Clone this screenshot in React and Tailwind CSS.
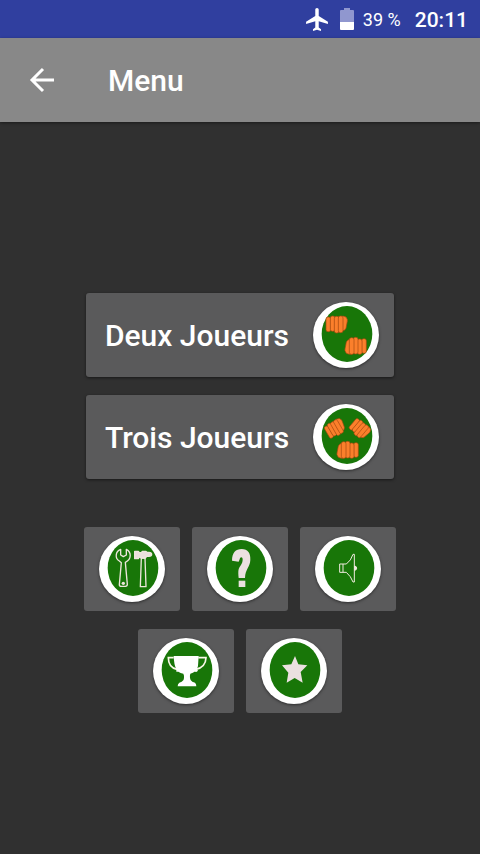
const WIDE_BUTTONS = [
  { label: 'Deux Joueurs', Art: TwoFists },
  { label: 'Trois Joueurs', Art: ThreeFists },
]

const SMALL_BUTTONS = [
  { label: 'Options', Art: Tools },
  { label: 'Aide', Art: Question },
  { label: 'Son', Art: Speaker },
  { label: 'Scores', Art: Trophy },
  { label: 'Noter', Art: Star },
]

export default function App() {
  return (
    <div className="flex min-h-screen flex-col bg-[#303030] font-['Roboto','Noto_Sans',sans-serif] text-white">
      <StatusBar />
      <header className="flex h-[84px] items-center bg-[#888888] pl-6 shadow-[0_1px_3px_rgba(0,0,0,0.45)]">
        <button type="button" aria-label="Retour" className="flex size-9 items-center justify-center">
          <BackArrow />
        </button>
        <h1 className="ml-12 pt-px text-[30px] font-medium leading-9">Menu</h1>
      </header>

      <main className="flex flex-1 flex-col items-center justify-center pt-[30px]">
        <div className="flex flex-col gap-[18px]">
          {WIDE_BUTTONS.map(({ label, Art }) => (
            <button
              key={label}
              type="button"
              className="flex h-[84px] items-center justify-between gap-6 rounded-[3px] bg-[#5a5a5b] pl-[19px] pr-[15px] shadow-[0_1px_3px_rgba(0,0,0,0.5)]"
            >
              <span className="pt-0.5 text-[30px] font-medium leading-9">{label}</span>
              <Disc>
                <Art />
              </Disc>
            </button>
          ))}
        </div>

        <div className="mt-12 flex max-w-[312px] flex-wrap justify-center gap-x-3 gap-y-[18px]">
          {SMALL_BUTTONS.map(({ label, Art }) => (
            <button
              key={label}
              type="button"
              aria-label={label}
              className="flex h-[84px] w-24 items-center justify-center rounded-[3px] bg-[#5a5a5b]"
            >
              <Disc>
                <Art />
              </Disc>
            </button>
          ))}
        </div>
      </main>
    </div>
  )
}

function StatusBar() {
  return (
    <div className="flex h-[38px] items-center justify-end bg-[#303f9f] pr-3">
      <svg viewBox="2 2 19 20" className="h-[23px] w-[22px]" fill="#fff">
        <path d="M21 16v-2l-8-5V3.5c0-.83-.67-1.5-1.5-1.5S10 2.67 10 3.5V9l-8 5v2l8-2.5V19l-2 1.5V22l3.5-1 3.5 1v-1.5L13 19v-5.5l8 2.5z" />
      </svg>
      <svg viewBox="0 0 14 22" className="ml-3 h-[22px] w-[14px]">
        <path d="M4 0h6v2h3q1 0 1 1v11H0V3q0-1 1-1h3z" fill="#9097cf" />
        <path d="M0 14h14v7q0 1-1 1H1q-1 0-1-1z" fill="#fff" />
      </svg>
      <span className="ml-[9px] pt-0.5 text-[18px] leading-6">39 %</span>
      <span className="ml-[14px] pt-0.5 text-[21px] font-medium leading-6">20:11</span>
    </div>
  )
}

function BackArrow() {
  return (
    <svg viewBox="0 0 36 36" className="size-9" fill="none" stroke="#fff" strokeWidth="3">
      <path d="M30 18H8M19 7L8 18l11 11" />
    </svg>
  )
}

// White disc with the green oval every button picture sits on
function Disc({ children }) {
  return (
    <span className="size-[66px] shrink-0 rounded-full bg-white shadow-[0_1px_3px_rgba(0,0,0,0.5)]">
      <svg viewBox="0 0 198 198" className="size-full" aria-hidden="true">
        <ellipse cx="102" cy="96" rx="76" ry="84" fill="#187608" />
        {children}
      </svg>
    </span>
  )
}

function Fist({ transform }) {
  return (
    <g transform={transform} fill="#fb7f2b" stroke="#a3480f" strokeWidth="2">
      <path d="M8-23Q20-27 28-22Q35-14 31-4L28 12Q25 20 16 20L8 14Z" />
      <rect x="-32" y="-22" width="14" height="44" rx="6" />
      <rect x="-19" y="-25" width="14" height="46" rx="6" />
      <rect x="-7" y="-24" width="14" height="50" rx="6" />
      <rect x="5" y="-25" width="14" height="50" rx="6" />
    </g>
  )
}

function TwoFists() {
  return (
    <>
      <Fist transform="translate(71 67)" />
      <Fist transform="translate(128 132) rotate(180)" />
    </>
  )
}

function ThreeFists() {
  return (
    <>
      <Fist transform="translate(67 73) rotate(-30) scale(0.9)" />
      <Fist transform="translate(141 75) rotate(40) scale(0.9)" />
      <Fist transform="translate(104 138) rotate(180)" />
    </>
  )
}

function Tools() {
  return (
    <g fill="none" stroke="#eee6dc" strokeWidth="4" strokeLinejoin="round">
      <path d="M65 40C49 46 47 67 61 75L67 80L61 146Q61 151 67 151H79Q85 151 85 145L79 79C98 71 98 48 82 40V57L73 62L65 57Z" />
      <circle cx="73" cy="142" r="5" fill="#eee6dc" stroke="none" />
      <path d="M127 66H138L141 152H124Z" />
      <path
        d="M107 46H118L121 50H127L130 46H140L144 49H150Q158 49 158 55T150 61H143L139 66H126L121 62L118 68H107Z"
        fill="#ebe0dc"
      />
    </g>
  )
}

function Question() {
  return (
    <g fill="#ebe0e0">
      <path d="M75 74C75 50 86 39 104 39C123 39 131 52 130 72C129 94 115 98 114 126H95C93 104 94 98 100 90C105 83 107 78 107 70C107 62 99 62 98 70L95 77Z" />
      <rect x="95" y="134" width="20" height="19" />
    </g>
  )
}

function Speaker() {
  return (
    <g fill="none" stroke="#f0eadf" strokeWidth="3">
      <path d="M74 84H94Q108 74 114 55H118V138H114Q108 121 94 109H74Z" />
      <path d="M84 84V109" />
      <path d="M119 90Q125 91 125 96.5T119 103Z" fill="#f0eadf" />
    </g>
  )
}

function Trophy() {
  return (
    <>
      <path
        d="M62 59H46Q46 88 72 94M136 59H159Q158 88 128 94"
        fill="none"
        stroke="#faf8e8"
        strokeWidth="5"
      />
      <path
        d="M62 54H137L135 84Q133 94 127 100Q120 106 112 107Q110 112 111 120Q112 129 118 131L126 134Q130 138 130 145H74Q74 138 79 134L86 131Q93 129 93 120Q94 112 91 107Q82 106 76 101H70V93Q63 82 62 54Z"
        fill="#fff"
      />
      <circle cx="129" cy="97" r="5" fill="#fff" />
    </>
  )
}

function Star() {
  return <path d="M102 54L112 79L139 82L119 102L125 134L101 120L77 134L82 104L63 82L91 79Z" fill="#ebe0e0" />
}
